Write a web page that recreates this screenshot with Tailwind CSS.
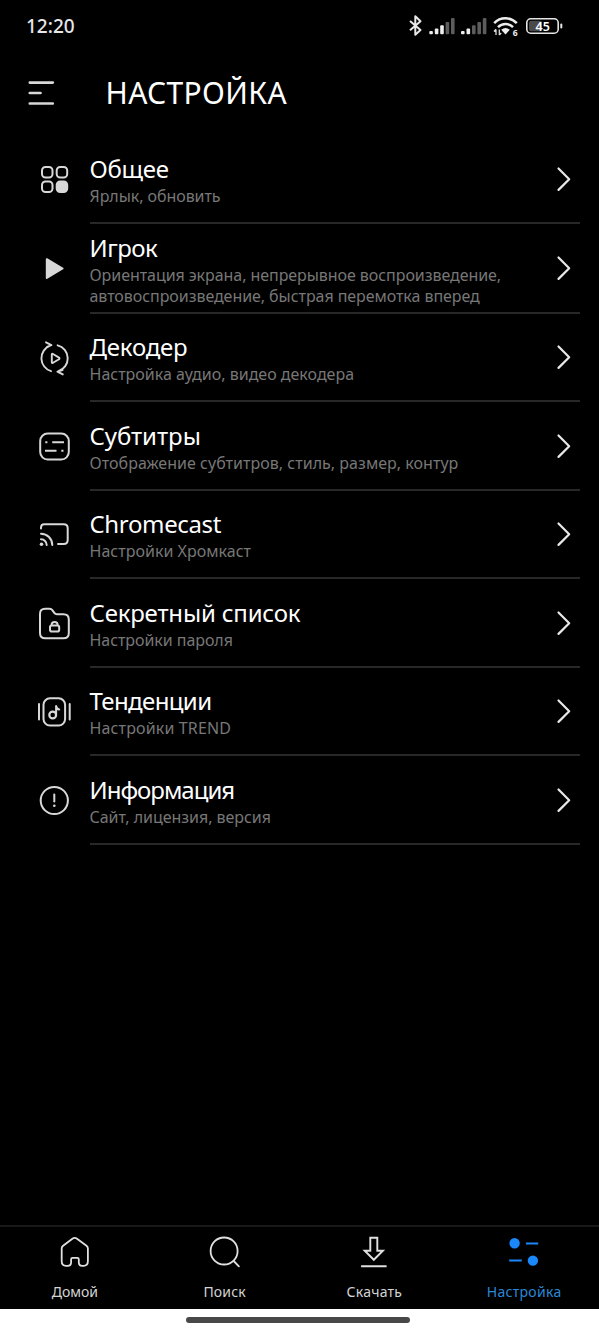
<!DOCTYPE html>
<html lang="ru">
<head>
<meta charset="utf-8">
<title>Настройка</title>
<script src="https://cdn.jsdelivr.net/npm/@tailwindcss/browser@4"></script>
</head>
<body class="flex h-[1333px] w-[599px] flex-col overflow-hidden bg-black font-['Noto_Sans',sans-serif] text-white">

<!-- Status bar -->
<div class="flex h-[52px] items-center justify-between pr-[34px] pl-[26px]">
  <span class="text-[19px] font-medium text-gray-200">12:20</span>
  <svg class="h-6 w-[160px]" viewBox="0 0 160 24" fill="none">
    <path d="M5 7 L15.5 16 L10.3 20.8 V2.3 L15.5 7.3 L5 16.3" stroke="#e8e8e8" stroke-width="2" stroke-linejoin="round"/>
    <g fill="#eee">
      <rect x="24.3" y="17" width="3.6" height="3.2" rx="1"/><rect x="29.8" y="14.6" width="3.6" height="5.6" rx="1"/><rect x="35.2" y="11.3" width="3.6" height="8.9" rx="1"/>
      <rect x="56" y="17" width="3.6" height="3.2" rx="1"/><rect x="61.5" y="14.6" width="3.6" height="5.6" rx="1"/>
    </g>
    <g fill="#5c5c5c">
      <rect x="40.6" y="8" width="3.6" height="12.2" rx="1"/><rect x="46" y="4" width="3.6" height="16.2" rx="1"/>
      <rect x="67" y="11.3" width="3.6" height="8.9" rx="1"/><rect x="72.4" y="8" width="3.6" height="12.2" rx="1"/><rect x="77.8" y="4" width="3.6" height="16.2" rx="1"/>
    </g>
    <g stroke="#eee" stroke-width="2.5">
      <path d="M89.2 9.2 A15.5 15.5 0 0 1 111.8 9.2"/>
      <path d="M93 13.2 A10.5 10.5 0 0 1 108 13.2"/>
    </g>
    <path d="M96.2 15.8 Q100.5 12.4 104.8 15.8 L100.5 20.6 Z" fill="#eee"/>
    <path d="M91 15.5 V21 M89 17.5 L91 15.2 M94.3 15.5 V21 M94.3 21.2 L96.2 18.8" stroke="#ddd" stroke-width="1.3"/>
    <text x="107.7" y="21.6" font-size="8.5" font-weight="700" fill="#eee">6</text>
    <rect x="126" y="5.3" width="26" height="13.4" rx="2.5" fill="#000"/>
    <rect x="124" y="6.8" width="13" height="10.4" rx="2" fill="#4a4a4a"/>
    <rect x="121.8" y="4.8" width="31.4" height="14.4" rx="4" stroke="#e5e5e5" stroke-width="1.6"/>
    <rect x="155.3" y="9.4" width="2" height="5.2" rx="1" fill="#e5e5e5"/>
    <text x="137.7" y="16.5" text-anchor="middle" font-size="12.5" font-weight="600" fill="#fff">45</text>
  </svg>
</div>

<!-- Title bar -->
<header class="flex h-[83px] items-center pl-7">
  <svg class="h-7 w-[27px]" viewBox="0 0 27 28" stroke="#d8d8d8" stroke-width="2.7" stroke-linecap="round"><path d="M1.8 2.6 H24.8 M1.8 13 H12.5 M1.8 23.5 H24.8"/></svg>
  <h1 class="mb-0.5 ml-[50.5px] text-[30px] leading-10 tracking-[0.35px]">НАСТРОЙКА</h1>
</header>

<!-- Settings list -->
<main class="flex-1">
  <section class="flex h-[89px] pr-[19px] pl-[34px]">
    <svg class="mr-4 size-10 shrink-0 self-center" viewBox="0 0 40 40" fill="none" stroke="#d8d8d8" stroke-width="2"><rect x="8" y="7" width="10.5" height="10.5" rx="3.5"/><rect x="22.7" y="7" width="10.5" height="10.5" rx="3.5"/><rect x="8" y="21.5" width="10.5" height="10.5" rx="3.5"/><rect x="22.7" y="21.5" width="10.5" height="10.5" rx="3.5" fill="#d8d8d8"/></svg>
    <div class="flex flex-1 items-center border-b-2 border-[#282828] pr-2">
      <div class="-ml-[0.5px] flex-1"><h2 class="text-2xl leading-[35px] tracking-[-0.3px]">Общее</h2><p class="text-base leading-[21px] tracking-[-0.06px] text-[#777]">Ярлык, обновить</p></div>
      <svg class="h-[26px] w-4" viewBox="0 0 16 26" fill="none" stroke="#e8e8e8" stroke-width="2.2" stroke-linecap="round" stroke-linejoin="round"><path d="M2.5 2.5 L13.2 13.2 L2.5 23.9"/></svg>
    </div>
  </section>
  <section class="flex h-[90px] pr-[19px] pl-[34px]">
    <svg class="mr-4 size-10 shrink-0 self-center" viewBox="0 0 40 40"><path d="M12.8 10.2 L28.6 19.5 L12.8 29 Z" fill="#d8d8d8" stroke="#d8d8d8" stroke-width="2" stroke-linejoin="round"/></svg>
    <div class="flex flex-1 items-center border-b-2 border-[#282828] pr-2">
      <div class="-ml-[0.5px] flex-1"><h2 class="text-2xl leading-[35px] tracking-[-0.5px]">Игрок</h2><p class="text-base leading-[21px] tracking-[-0.06px] text-[#777]">Ориентация экрана, непрерывное воспроизведение,<br>автовоспроизведение, быстрая перемотка вперед</p></div>
      <svg class="h-[26px] w-4" viewBox="0 0 16 26" fill="none" stroke="#e8e8e8" stroke-width="2.2" stroke-linecap="round" stroke-linejoin="round"><path d="M2.5 2.5 L13.2 13.2 L2.5 23.9"/></svg>
    </div>
  </section>
  <section class="flex h-[88px] pr-[19px] pl-[34px]">
    <svg class="mr-4 size-10 shrink-0 self-center" viewBox="0 0 40 40" fill="none" stroke="#d8d8d8" stroke-width="1.9" stroke-linecap="round" stroke-linejoin="round"><path d="M12 4.3 L17.4 7.2 L13 8.8 M16 7.7 A13.5 13.5 0 0 0 17 33.2 M23.6 7.3 A13.5 13.5 0 0 1 24.4 33.2 M28.5 32 L23.4 33.6 L28.8 36.4"/><path d="M17.8 16.6 Q17.8 15.4 19 16 L25 19.6 Q26 20.4 25 21.2 L19 24.8 Q17.8 25.4 17.8 24.2 Z"/></svg>
    <div class="flex flex-1 items-center border-b-2 border-[#282828] pr-2">
      <div class="-ml-[0.5px] flex-1"><h2 class="text-2xl leading-[35px] tracking-[-0.2px]">Декодер</h2><p class="text-base leading-[21px] text-[#777]">Настройка аудио, видео декодера</p></div>
      <svg class="h-[26px] w-4" viewBox="0 0 16 26" fill="none" stroke="#e8e8e8" stroke-width="2.2" stroke-linecap="round" stroke-linejoin="round"><path d="M2.5 2.5 L13.2 13.2 L2.5 23.9"/></svg>
    </div>
  </section>
  <section class="flex h-[89px] pr-[19px] pl-[34px]">
    <svg class="mr-4 size-10 shrink-0 self-center" viewBox="0 0 40 40" fill="none" stroke="#d8d8d8" stroke-width="2"><rect x="6.2" y="6.6" width="28.6" height="26" rx="7.5"/><path d="M11.3 15.2 H13.4 M18.2 15.2 H30 M11 23.8 H22.5 M27.3 23.8 H29.5"/></svg>
    <div class="flex flex-1 items-center border-b-2 border-[#282828] pr-2">
      <div class="-ml-[0.5px] flex-1"><h2 class="text-2xl leading-[35px] tracking-[-0.05px]">Субтитры</h2><p class="text-base leading-[21px] tracking-[0.03px] text-[#777]">Отображение субтитров, стиль, размер, контур</p></div>
      <svg class="h-[26px] w-4" viewBox="0 0 16 26" fill="none" stroke="#e8e8e8" stroke-width="2.2" stroke-linecap="round" stroke-linejoin="round"><path d="M2.5 2.5 L13.2 13.2 L2.5 23.9"/></svg>
    </div>
  </section>
  <section class="flex h-[88px] pr-[19px] pl-[34px]">
    <svg class="mr-4 size-10 shrink-0 self-center" viewBox="0 0 40 40" fill="none" stroke="#d8d8d8" stroke-width="2" stroke-linecap="round"><path d="M7 13.5 V12.5 Q7 9.2 10.3 9.2 H29.7 Q33.7 9.2 33.7 13.2 V25 Q33.7 29 29.7 29 H24"/><path d="M7 18.7 A11.3 11.3 0 0 1 18.3 30 M7 24.3 A5.7 5.7 0 0 1 12.7 30"/><circle cx="7.5" cy="29.3" r="1.8" fill="#d8d8d8" stroke="none"/></svg>
    <div class="flex flex-1 items-center border-b-2 border-[#282828] pr-2">
      <div class="-ml-[0.5px] flex-1"><h2 class="text-2xl leading-[35px] tracking-[-0.35px]">Chromecast</h2><p class="text-base leading-[21px] tracking-[0.02px] text-[#777]">Настройки Хромкаст</p></div>
      <svg class="h-[26px] w-4" viewBox="0 0 16 26" fill="none" stroke="#e8e8e8" stroke-width="2.2" stroke-linecap="round" stroke-linejoin="round"><path d="M2.5 2.5 L13.2 13.2 L2.5 23.9"/></svg>
    </div>
  </section>
  <section class="flex h-[89px] pr-[19px] pl-[34px]">
    <svg class="mr-4 size-10 shrink-0 self-center" viewBox="0 0 40 40" fill="none" stroke="#d8d8d8" stroke-width="2" stroke-linejoin="round"><path d="M6 10 Q6 4.8 11.2 4.8 H15.5 Q17.4 4.8 18.5 6.3 L20.3 8.8 Q21.3 10.2 23 10.2 H29.5 Q34.8 10.2 34.8 15.5 V29 Q34.8 34.3 29.5 34.3 H11.3 Q6 34.3 6 29 Z"/><rect x="16" y="21.6" width="9.2" height="6" rx="1.8"/><path d="M17.6 21.5 V20.8 Q17.6 18 20.6 18 Q23.6 18 23.6 20.8 V21.5"/></svg>
    <div class="flex flex-1 items-center border-b-2 border-[#282828] pr-2">
      <div class="-ml-[0.5px] flex-1"><h2 class="text-2xl leading-[35px] tracking-[-0.2px]">Секретный список</h2><p class="text-base leading-[21px] tracking-[-0.06px] text-[#777]">Настройки пароля</p></div>
      <svg class="h-[26px] w-4" viewBox="0 0 16 26" fill="none" stroke="#e8e8e8" stroke-width="2.2" stroke-linecap="round" stroke-linejoin="round"><path d="M2.5 2.5 L13.2 13.2 L2.5 23.9"/></svg>
    </div>
  </section>
  <section class="flex h-[88px] pr-[19px] pl-[34px]">
    <svg class="mr-4 size-10 shrink-0 self-center" viewBox="0 0 40 40" fill="none" stroke="#d8d8d8" stroke-width="2" stroke-linecap="round" stroke-linejoin="round"><rect x="9.5" y="6.3" width="21.6" height="27.2" rx="6.5"/><path d="M5 12 V27.5 M35.7 12 V27.5"/><circle cx="18.7" cy="23" r="3.4" stroke-width="2.2"/><path d="M22.1 23 V14 Q22.5 17 25.2 17.6"/></svg>
    <div class="flex flex-1 items-center border-b-2 border-[#282828] pr-2">
      <div class="-ml-[0.5px] flex-1"><h2 class="text-2xl leading-[35px] tracking-[-0.6px]">Тенденции</h2><p class="text-base leading-[21px] tracking-[0.14px] text-[#777]">Настройки TREND</p></div>
      <svg class="h-[26px] w-4" viewBox="0 0 16 26" fill="none" stroke="#e8e8e8" stroke-width="2.2" stroke-linecap="round" stroke-linejoin="round"><path d="M2.5 2.5 L13.2 13.2 L2.5 23.9"/></svg>
    </div>
  </section>
  <section class="flex h-[89px] pr-[19px] pl-[34px]">
    <svg class="mr-4 size-10 shrink-0 self-center" viewBox="0 0 40 40" fill="none" stroke="#d8d8d8" stroke-width="2" stroke-linecap="round"><circle cx="20.3" cy="19.5" r="13.6"/><path d="M20.3 13.5 V20.5"/><circle cx="20.3" cy="24.8" r="1.3" fill="#d8d8d8" stroke="none"/></svg>
    <div class="flex flex-1 items-center border-b-2 border-[#282828] pr-2">
      <div class="-ml-[0.5px] flex-1"><h2 class="text-2xl leading-[35px] tracking-[-1px]">Информация</h2><p class="text-base leading-[21px] tracking-[-0.03px] text-[#777]">Сайт, лицензия, версия</p></div>
      <svg class="h-[26px] w-4" viewBox="0 0 16 26" fill="none" stroke="#e8e8e8" stroke-width="2.2" stroke-linecap="round" stroke-linejoin="round"><path d="M2.5 2.5 L13.2 13.2 L2.5 23.9"/></svg>
    </div>
  </section>
</main>

<!-- Tab bar -->
<nav class="grid h-[84px] grid-cols-4 border-t-2 border-[#191919] text-sm leading-5 text-[#d4d4d4]">
  <a class="flex flex-col items-center gap-2.5 pt-[5px]">
    <svg class="size-10" viewBox="0 0 40 40" fill="none" stroke="#e0e0e0" stroke-width="1.8" stroke-linejoin="round"><path d="M6.7 16.5 Q6.7 14.8 8.1 13.7 L17.4 6.7 Q19.7 5.1 22 6.7 L31.5 13.7 Q32.9 14.8 32.9 16.5 V29.3 Q32.9 33.8 28.5 33.8 H27.3 Q23.8 33.8 23.8 30.5 V27.3 Q23.8 25.8 22.3 25.8 H17.6 Q16.1 25.8 16.1 27.3 V30.5 Q16.1 33.8 12.6 33.8 H11.1 Q6.7 33.8 6.7 29.3 Z"/></svg>
    Домой</a>
  <a class="flex flex-col items-center gap-2.5 pt-[5px]">
    <svg class="size-10" viewBox="0 0 40 40" fill="none" stroke="#e0e0e0" stroke-width="1.8" stroke-linecap="round"><circle cx="19.1" cy="19" r="13.5"/><path d="M28.7 29 L33.9 34.3"/></svg>
    <span class="tracking-[0.15px]">Поиск</span></a>
  <a class="flex flex-col items-center gap-2.5 pt-[5px]">
    <svg class="size-10" viewBox="0 0 40 40" fill="none" stroke="#e0e0e0" stroke-width="1.9"><path d="M16.3 5.8 H23.3 V18.8 H28.9 L19.8 27.8 L10.7 18.8 H16.3 Z M7.1 34.3 H32.6"/></svg>
    <span class="tracking-[0.25px]">Скачать</span></a>
  <a class="flex flex-col items-center gap-2.5 pt-[5px] text-[#2a88d8]">
    <svg class="size-10" viewBox="0 0 40 40" fill="#1a88fa" stroke="#1a88fa" stroke-width="2"><circle cx="10.6" cy="11.3" r="4.2"/><path d="M21.9 11.4 H34.2 M5.2 28.6 H17.8"/><circle cx="28.9" cy="28.6" r="4.2"/></svg>
    <span class="tracking-[0.3px]">Настройка</span></a>
</nav>

<!-- Gesture handle -->
<div class="flex h-6 bg-white pt-2 pl-[186px]"><div class="h-[6px] w-56 rounded-full bg-[#484848]"></div></div>
</body>
</html>
